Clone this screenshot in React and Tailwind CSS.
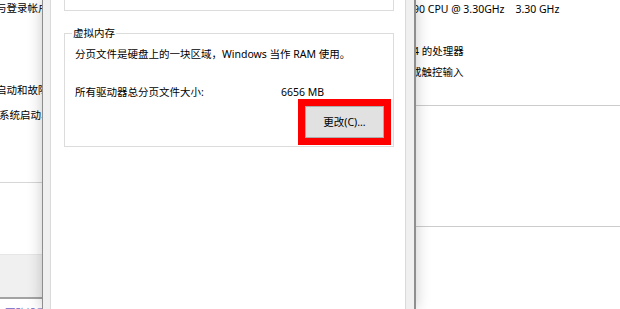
import React from "react";

const font = { fontFamily: '"Noto Sans", "Noto Sans CJK SC", sans-serif' };

function LeftWindow() {
  return (
    <div className="w-[42px] h-full shrink-0 overflow-hidden bg-white text-[10.5px] text-black whitespace-nowrap">
      <div className="leading-[16px] -ml-[4px]">与登录帐户相关的桌面设置</div>
      <div className="mt-[66px] leading-[16px] -ml-[4px]">启动和故障恢复</div>
      <div className="mt-[9px] leading-[16px] -ml-[1px]">系统启动、系统故障和调试信息</div>
      <div className="mt-[59px] h-px bg-[#d6d6d6]" />
      <div className="mt-[71px] h-[43px] bg-[#f0f0f0] border-t border-[#e6e6e6]" />
      <div className="h-[2px] bg-[#a3a3a3]" />
      <div className="mt-[6px] leading-[16px] pl-[5px] text-[#6b5fc4]">更改设置</div>
    </div>
  );
}

function VirtualMemory() {
  return (
    <div className="relative mt-[22px] h-[114px] border border-[#dcdcdc]">
      <span className="absolute -top-[9px] left-[7px] bg-white px-px leading-[16px]">
        虚拟内存
      </span>
      <div className="pt-[12px] pl-[10px] leading-[16px]">
        分页文件是硬盘上的一块区域，Windows 当作 RAM 使用。
      </div>
      <div className="mt-[23px] pl-[10px] flex leading-[14px]">
        <span className="w-[206px]">所有驱动器总分页文件大小:</span>
        <span>6656 MB</span>
      </div>
      <div className="flex justify-end pr-[2px]">
        <div className="w-[93px] h-[46px] border-[7px] border-[#ff0000]">
          <button className="w-full h-full border border-[#adadad] bg-[#e1e1e1] flex items-center justify-center leading-none pt-px text-black">
            更改(C)...
          </button>
        </div>
      </div>
    </div>
  );
}

function Dialog() {
  return (
    <div className="relative z-10 w-[374px] h-full shrink-0 flex bg-[#f0f0f0] border-l border-r-2 border-[#8e8e8e] pl-[7px] pr-[8px] shadow-[0_0_14px_rgba(0,0,0,0.22)]">
      <div className="w-[356px] h-full bg-white border-x border-[#dadada] pl-[13px] pr-[11px] text-[10.5px] text-black">
        <div className="h-[11px] border-x border-b border-[#dcdcdc]" />
        <VirtualMemory />
      </div>
    </div>
  );
}

function RightWindow() {
  return (
    <div className="flex-1 h-full overflow-hidden bg-white text-[10.5px] text-black whitespace-nowrap">
      <div className="mt-px leading-[16px] -ml-[3px]">90 CPU @ 3.30GHz&nbsp;&nbsp;&nbsp;&nbsp;3.30 GHz</div>
      <div className="mt-[26px] leading-[16px] -ml-[3px]">4 的处理器</div>
      <div className="mt-[5px] leading-[16px] -ml-[5px]">或触控输入</div>
      <div className="mt-[25px] h-px bg-[#cccccc]" />
      <div className="mt-[120px] h-px bg-[#cccccc]" />
    </div>
  );
}

export default function App() {
  return (
    <div className="w-[620px] h-[309px] flex overflow-hidden bg-white" style={font}>
      <LeftWindow />
      <Dialog />
      <RightWindow />
    </div>
  );
}
